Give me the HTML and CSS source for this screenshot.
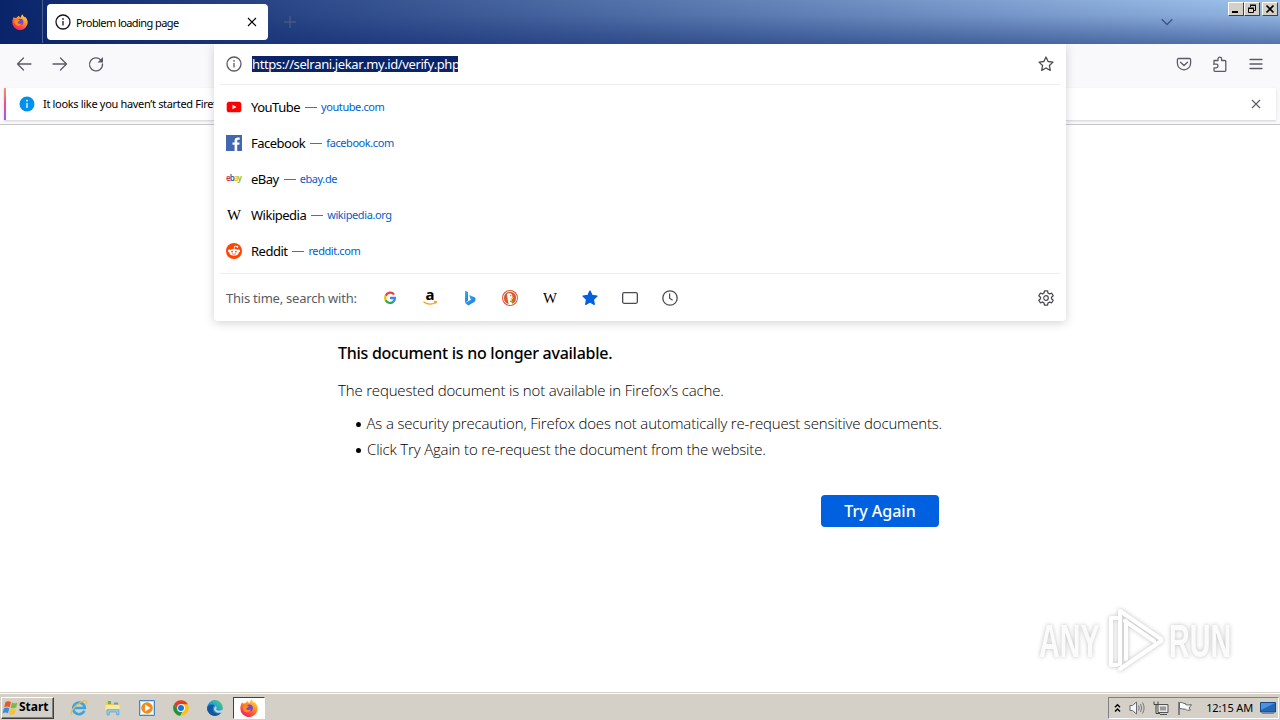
FILE: index.html
```html
<!DOCTYPE html>
<html lang="en">
<head>
    <meta charset="UTF-8">
    <meta name="viewport" content="width=device-width, initial-scale=1.0">
    <title>Problem loading page</title>
    <link rel="stylesheet" href="styles.css">
</head>
<body>
    <!-- shared icons -->
    <svg class="defs" width="0" height="0">
        <defs>
            <linearGradient id="fxBody" x1=".8" y1="0" x2=".2" y2="1">
                <stop offset="0" stop-color="#ffe141"/>
                <stop offset=".35" stop-color="#ff9a24"/>
                <stop offset=".7" stop-color="#ff4a3d"/>
                <stop offset="1" stop-color="#e21b72"/>
            </linearGradient>
            <linearGradient id="edgeBody" x1="0" y1="1" x2="1" y2="0">
                <stop offset="0" stop-color="#0c59a4"/>
                <stop offset=".5" stop-color="#1b9de2"/>
                <stop offset="1" stop-color="#5ed65a"/>
            </linearGradient>
            <linearGradient id="bingBody" x1="0" y1="0" x2="1" y2="1">
                <stop offset="0" stop-color="#37bdff"/>
                <stop offset="1" stop-color="#1b6fe0"/>
            </linearGradient>
            <symbol id="firefox" viewBox="0 0 16 16">
                <path fill="url(#fxBody)" d="M1.7 3.1c.5.2.9.6 1.2 1 .6-.3 1.2-.4 1.8-.3C5.500 2.600 6.300 2 7.200 1.700 7.100 2.600 7.700 3.300 8.700 3.600 9 2.200 9.500.9 10.500.2c.3 1.500 1.200 2.200 2.200 3.200.2-.3.2-.7.1-1 1.700 1.500 2.900 3.700 2.900 6A7.700 7.700 0 0 1 .3 8.400C.3 6.300.9 4.600 1.700 3.100z"/>
                <circle cx="8.200" cy="8" r="3.200" fill="#7a43d6"/>
                <path fill="#ff8a1e" d="M2.300 7c1.500-1.800 3.400-1.900 5.300-1 .3 1-.2 1.600-1.400 1.800-.9.5-.5 1.900.9 2 1.100.1 1.700-.7 2.700-.3-1 1.700-2.500 2.500-4.100 2.200C3.600 11.300 2.400 9.400 2.300 7z"/>
            </symbol>
            <symbol id="info" viewBox="0 0 16 16">
                <circle cx="8" cy="8" r="7" fill="none" stroke="currentColor" stroke-width="1.300"/>
                <path d="M8 7v4.500" stroke="currentColor" stroke-width="1.300"/>
                <circle cx="8" cy="4.900" r=".85" fill="currentColor"/>
            </symbol>
            <symbol id="close" viewBox="0 0 10 10">
                <path d="M1 1l8 8M9 1L1 9" fill="none" stroke="currentColor" stroke-width="1.100"/>
            </symbol>
        </defs>
    </svg>

    <div class="screen">
        <header class="titlebar">
            <div class="fx-view"><svg width="16" height="16"><use href="#firefox"/></svg></div>
            <div class="tab">
                <svg class="tab-icon" width="16" height="16"><use href="#info"/></svg>
                <span class="tab-title">Problem loading page</span>
                <svg class="tab-close" width="10" height="10"><use href="#close"/></svg>
            </div>
            <svg class="new-tab" width="12" height="12" viewBox="0 0 12 12"><path d="M6 0v12M0 6h12" stroke="#55627a" fill="none"/></svg>
            <svg class="all-tabs" width="12" height="8" viewBox="0 0 12 8"><path d="M.7 1.200L6 6.500l5.300-5.300" stroke="#3c5888" stroke-width="1.400" fill="none"/></svg>
            <div class="window-buttons">
                <button class="win-btn"><svg width="12" height="10" viewBox="0 0 12 10"><path d="M2 8h6" stroke="#000" stroke-width="2"/></svg></button>
                <button class="win-btn"><svg width="12" height="10" viewBox="0 0 12 10"><path d="M4.500 3V1.500h5v5H8M4 1h6M2.500 4.500h5v4h-5zM2 4h6" fill="none" stroke="#000"/></svg></button>
                <button class="win-btn win-close"><svg width="12" height="10" viewBox="0 0 12 10"><path d="M2.500 1.500l7 7M9.500 1.500l-7 7" stroke="#000" stroke-width="1.700"/></svg></button>
            </div>
        </header>

        <nav class="toolbar">
            <svg width="16" height="16" viewBox="0 0 16 16"><path d="M15 8H1.500M7.500 2L1.500 8l6 6"/></svg>
            <svg width="16" height="16" viewBox="0 0 16 16"><path d="M1 8h13.500M8.500 2l6 6-6 6"/></svg>
            <svg width="16" height="16" viewBox="0 0 16 16"><path d="M13.300 4.600A6.500 6.500 0 1 0 14.500 8"/><path class="solid" d="M15 1v5.500H9.500z"/></svg>
            <div class="toolbar-right">
                <svg width="16" height="16" viewBox="0 0 16 16"><path d="M2.600 2.500h10.800a1.200 1.200 0 0 1 1.200 1.200v3.500a6.600 6.600 0 0 1-13.200 0V3.700a1.200 1.200 0 0 1 1.200-1.200zM4.500 6.200L8 9.500l3.500-3.300"/></svg>
                <svg width="16" height="16" viewBox="0 0 16 16"><path d="M2 7V4.500h4V3a1.800 1.800 0 0 1 3.600 0v1.500h3.200a1 1 0 0 1 1 1v9a.8.800 0 0 1-.8.800H3a1 1 0 0 1-1-1v-2.500h2.200a1.800 1.800 0 0 0 0-3.600H1.500"/></svg>
                <svg width="16" height="16" viewBox="0 0 16 16"><path d="M2 3.500h12M2 8h12M2 12.500h12"/></svg>
            </div>
        </nav>

        <div class="notice-wrap">
            <div class="notice">
                <svg class="notice-icon" width="16" height="16" viewBox="0 0 16 16"><circle cx="8" cy="8" r="7.500" fill="#0090ed"/><path d="M8 7v5" stroke="#fff" stroke-width="1.300"/><circle cx="8" cy="4.700" r=".9" fill="#fff"/></svg>
                <span class="notice-text">It looks like you haven’t started Firefox</span>
                <svg class="notice-close" width="10" height="10"><use href="#close"/></svg>
            </div>
        </div>

        <main class="page">
            <div class="error">
                <h1>This document is no longer available.</h1>
                <p class="desc">The requested document is not available in Firefox’s cache.</p>
                <ul>
                    <li>As a security precaution, Firefox does not automatically re-request sensitive documents.</li>
                    <li>Click Try Again to re-request the document from the website.</li>
                </ul>
                <button class="try-again">Try Again</button>
            </div>
        </main>

        <footer class="taskbar">
            <button class="start">
                <svg width="18" height="16" viewBox="0 0 18 16">
                    <path fill="#e8562a" d="M3.500 2C5.500.8 7.300 1 9 2L7.700 7.200C6 6.200 4.200 6.200 2.200 7.200z"/>
                    <path fill="#7dba3a" d="M9.900 2.500c1.700 1 3.500 1 5.600-.1l-1.400 5.200c-1.900 1-3.700 1-5.500.1z"/>
                    <path fill="#3c8ed8" d="M1.900 8.200c2-1 3.800-1 5.500 0L6 13.300c-1.700-1-3.500-1-5.500.1z"/>
                    <path fill="#f6c32c" d="M8.300 8.700c1.800 1 3.600 1 5.500 0l-1.400 5.200c-1.900 1-3.700 1-5.500 0z"/>
                </svg>
                <span>Start</span>
            </button>
            <div class="quick">
                <svg width="18" height="18" viewBox="0 0 18 18">
                    <path d="M14.300 11.800A5.800 5.800 0 1 1 14.800 9H4" fill="none" stroke="#3aa5e6" stroke-width="2.600"/>
                    <path d="M1.500 15.500C-1 12 10 1.500 15.500 1.800c1.500.3 1.300 2 .6 3.400" fill="none" stroke="#f0bf3a" stroke-width="1.300"/>
                </svg>
                <svg width="18" height="18" viewBox="0 0 18 18">
                    <path fill="#e9c95e" d="M2 3h5l1 1.500h7V13H2z"/><path fill="#68b25c" d="M4 2h3v3H4z"/><path fill="#5d9bd4" d="M10 3.500h4v2h-4z"/>
                    <path fill="#fbe9a0" d="M1.500 6h14v5h-14z"/><path fill="#8cc6ec" stroke="#5c9fce" stroke-width=".6" d="M3 10.500h12V16h-2.500v-3h-7v3H3z"/>
                </svg>
                <svg width="18" height="18" viewBox="0 0 18 18">
                    <path fill="#b9dcf5" stroke="#4288c5" d="M1.500 1.500h15v15h-15z"/><path fill="#fff" d="M3 3h12v12H3z"/>
                    <circle cx="9" cy="9" r="5.800" fill="#f28a1c"/><path fill="#fff" d="M7 5.500L12.500 9 7 12.500z"/>
                </svg>
                <svg width="18" height="18" viewBox="0 0 18 18">
                    <circle cx="9" cy="9" r="7.800" fill="#fbc116"/>
                    <path fill="#e33b2e" d="M2.200 5.100A7.800 7.800 0 0 1 15.800 5.200H9L5.700 10.900z"/>
                    <path fill="#229342" d="M2.200 5.100l3.500 5.800L9 12.800h1.200l-2 4A7.800 7.800 0 0 1 2.200 5.100z"/>
                    <circle cx="9" cy="9" r="3.900" fill="#fff"/><circle cx="9" cy="9" r="3" fill="#1a73e8"/>
                </svg>
                <svg width="18" height="18" viewBox="0 0 18 18">
                    <circle cx="9" cy="9" r="7.900" fill="url(#edgeBody)"/>
                    <path fill="#1455a0" d="M1.100 9c.6-3.400 5-4.600 7.600-2.600C6 7.500 6 12.500 9.500 14c2 .9 4 .5 5.600-.4C12.500 17.500 7.500 17.800 4.200 15.200 2 13.500 1 11.300 1.100 9z"/>
                    <path fill="#d4d0c8" d="M9.700 7.200c1.300.7 1 2.200.4 3 .3 1.300 2.700 1.900 5 1.100l2-.5-1 2.500c-3 1.400-7.500-.1-8.100-3.100.1-.9.800-2.700 1.700-3z"/>
                </svg>
                <div class="running"><svg width="18" height="18"><use href="#firefox"/></svg></div>
            </div>
            <div class="tray">
                <svg width="7" height="10" viewBox="0 0 7 10"><path d="M1 4.200l2.500-2.500L6 4.200M1 8.400l2.500-2.500L6 8.400" fill="none" stroke="#000" stroke-width="1.400"/></svg>
                <svg width="16" height="16" viewBox="0 0 16 16"><path d="M1 5.500h2.500L7.500 2v12l-4-3.500H1z" fill="#f5f5f5" stroke="#6b6b6b"/><path d="M9.500 5.500q1.500 2.500 0 5M11.500 4q2.500 4 0 8M13.500 2.500q3.200 5.500 0 11" fill="none" stroke="#777"/></svg>
                <svg width="16" height="16" viewBox="0 0 16 16"><path d="M5 4.500h10v8H5zM7 14.500h7" fill="#e8e8e8" stroke="#555"/><path d="M7 6.500h6v4H7z" fill="#999"/><path d="M1 1.500v3h4v-3M3 4v9.500h4" fill="none" stroke="#444"/></svg>
                <svg width="16" height="16" viewBox="0 0 16 16"><path d="M2 2v13" stroke="#555" stroke-width="1.300"/><path d="M2.500 2.500C5 1.500 6 4 8.500 3.500v1c2 1 4 .2 6 .2L12 8l1.500 2c-2 .5-4 .5-5-.8-2 .3-4-1-6-.4z" fill="#fafafa" stroke="#666"/></svg>
                <span class="clock">12:15 AM</span>
                <svg width="16" height="12" viewBox="0 0 16 12"><path d="M.5.500h15v9.500H.5z" fill="#2467b8" stroke="#16498a"/><path d="M1 1h14L1 8z" fill="#4b93dc"/><path d="M2 11.300h12" stroke="#777"/></svg>
            </div>
        </footer>

        <!-- address bar dropdown -->
        <section class="urlbar">
            <div class="url-row">
                <svg class="url-info" width="16" height="16"><use href="#info"/></svg>
                <span class="url">https://selrani.jekar.my.id/verify.php</span>
                <svg class="url-star" width="16" height="16" viewBox="0 0 16 16"><path d="M8 1l2.100 4.500 4.900.6-3.600 3.400.9 4.900L8 12l-4.300 2.400.9-4.900L1 6.100l4.900-.6z" fill="none" stroke="#4b4b55" stroke-width="1.300" stroke-linejoin="round"/></svg>
            </div>
            <ul class="results">
                <li>
                    <svg width="16" height="16" viewBox="0 0 16 16"><rect x=".7" y="2.700" width="14.600" height="10.600" rx="2.600" fill="#f00"/><path fill="#fff" d="M6.500 5.700l4 2.300-4 2.300z"/></svg>
                    <span class="name">YouTube</span><i></i><span class="site">youtube.com</span>
                </li>
                <li>
                    <svg width="16" height="16" viewBox="0 0 16 16"><path fill="#4267b2" d="M0 0h16v16H0z"/><path fill="#fff" d="M8.600 16V9.800H6.500V7.400h2.100V5.600c0-2.100 1.300-3.200 3.200-3.200.9 0 1.700.1 1.900.1v2.200h-1.300c-1 0-1.200.5-1.200 1.200v1.500h2.400l-.3 2.400h-2.100V16z"/></svg>
                    <span class="name">Facebook</span><i></i><span class="site">facebook.com</span>
                </li>
                <li>
                    <svg class="ebay" width="16" height="16" viewBox="0 0 16 16"><text x="0" y="10" textLength="16"><tspan fill="#e53238">e</tspan><tspan fill="#0064d2">b</tspan><tspan fill="#f5af02">a</tspan><tspan fill="#86b817">y</tspan></text></svg>
                    <span class="name">eBay</span><i></i><span class="site">ebay.de</span>
                </li>
                <li>
                    <svg class="wiki" width="16" height="16" viewBox="0 0 16 16"><text x="1" y="13" textLength="14" lengthAdjust="spacingAndGlyphs">W</text></svg>
                    <span class="name">Wikipedia</span><i></i><span class="site">wikipedia.org</span>
                </li>
                <li>
                    <svg width="16" height="16" viewBox="0 0 16 16"><circle cx="8" cy="8" r="8" fill="#ff4500"/><path d="M8 6l.7-3 2.300.6" fill="none" stroke="#fff" stroke-width=".8"/><circle cx="11.300" cy="3.700" r="1" fill="#fff"/><circle cx="3.300" cy="7.900" r="1.300" fill="#fff"/><circle cx="12.700" cy="7.900" r="1.300" fill="#fff"/><ellipse cx="8" cy="9.300" rx="4.700" ry="3.400" fill="#fff"/><circle cx="6.100" cy="8.600" r=".9" fill="#ff4500"/><circle cx="9.900" cy="8.600" r=".9" fill="#ff4500"/><path d="M6 10.700q2 1.300 4 0" fill="none" stroke="#ff4500" stroke-width=".7"/></svg>
                    <span class="name">Reddit</span><i></i><span class="site">reddit.com</span>
                </li>
            </ul>
            <div class="engines">
                <span class="engines-label">This time, search with:</span>
                <div class="engine-list">
                    <svg width="16" height="16" viewBox="0 0 16 16"><g fill="none" stroke-width="2.300"><path stroke="#ea4335" d="M12 4.400A4.900 4.900 0 0 0 3.700 5.700"/><path stroke="#fbbc05" d="M3.700 5.600a5 5 0 0 0 0 4.800"/><path stroke="#34a853" d="M3.700 10.300A4.900 4.900 0 0 0 11.500 11.600"/><path stroke="#4285f4" d="M8 8h4.900a4.900 4.900 0 0 1-1.600 3.700"/></g></svg>
                    <svg class="amazon" width="16" height="16" viewBox="0 0 16 16"><text x="3.500" y="10">a</text><path d="M1.500 11.700c4 3 8.500 3 12 .8M12 11.700l2.200-.1-.5 2" fill="none" stroke="#f90" stroke-width="1.200"/></svg>
                    <svg width="16" height="16" viewBox="0 0 16 16"><path fill="url(#bingBody)" d="M3 .8l3 1.100v8.500L3 13z"/><path fill="url(#bingBody)" d="M7.200 5l6 2.500c.6 1.700.3 3.500-1 4.600L6.300 15.500 3 13l6.200-3.400-1-1z"/></svg>
                    <svg width="16" height="16" viewBox="0 0 16 16"><circle cx="8" cy="8" r="8" fill="#de5833"/><circle cx="8" cy="8" r="6.600" fill="#de5833" stroke="#fff" stroke-width=".9"/><path fill="#fff" d="M5 4c1-1.300 4.500-1.200 5.200 1.200l.3 3.200-1 .7.700 5c-1.200.4-2.500.4-3.500 0C6 11 5.300 7.500 5 4z"/><path fill="#fdd20a" d="M8.500 7.500l3.500.2-1.500 1.300-2-.1z"/><path fill="#65bc46" d="M8 10.500l3 .5-.5 1.800L8 12z"/><circle cx="8.800" cy="5.700" r=".6" fill="#2d4f8e"/></svg>
                    <svg class="wiki" width="16" height="16" viewBox="0 0 16 16"><text x="1" y="13" textLength="14" lengthAdjust="spacingAndGlyphs">W</text></svg>
                    <svg width="16" height="16" viewBox="0 0 16 16"><path d="M8 1l2.100 4.500 4.900.6-3.600 3.400.9 4.900L8 12l-4.300 2.400.9-4.900L1 6.100l4.900-.6z" fill="#0060df" stroke="#0060df" stroke-width="1.300" stroke-linejoin="round"/></svg>
                    <svg width="16" height="16" viewBox="0 0 16 16"><rect x=".65" y="2.650" width="14.700" height="10.700" rx="1.500" fill="none" stroke="#4b4b55" stroke-width="1.300"/></svg>
                    <svg width="16" height="16" viewBox="0 0 16 16"><circle cx="8" cy="8" r="7.200" fill="none" stroke="#4b4b55" stroke-width="1.300"/><path d="M7.600 3.500v4.800l3 2" fill="none" stroke="#4b4b55" stroke-width="1.200"/></svg>
                </div>
                <svg class="gear" width="16" height="16" viewBox="0 0 16 16"><path d="M6.500.8h3l.5 2.200 1.500.9 2.200-.7 1.500 2.600L13.500 7.200v1.600l1.700 1.400-1.500 2.600-2.200-.7-1.500.9-.5 2.200h-3L6 13l-1.500-.9-2.200.7L.8 10.200l1.700-1.400V7.200L.8 5.800l1.500-2.600 2.200.7L6 3z" fill="none" stroke="#4b4b55" stroke-width="1.300" stroke-linejoin="round"/><circle cx="8" cy="8" r="2.300" fill="none" stroke="#4b4b55" stroke-width="1.200"/></svg>
            </div>
        </section>

        <!-- watermark -->
        <div class="watermark">
            <span>ANY</span>
            <svg width="58" height="66" viewBox="0 0 58 66"><path d="M10 58H4V11h6M13 4l41 28M13 4v53M18 14l29 20M19 14v38M13 62l41-28" fill="none" stroke="#fff" stroke-width="4" stroke-linejoin="round" stroke-linecap="round"/></svg>
            <span>RUN</span>
        </div>
    </div>
</body>
</html>
```
FILE: styles.css
```css
* {
    box-sizing: border-box;
}

body {
    margin: 0;
    font-family: "Noto Sans", "Open Sans", sans-serif;
    font-size: 11px;
    color: #000;
    background: #fff;
}

svg {
    display: block;
    flex: none;
    overflow: visible;
}

button {
    font-family: inherit;
    padding: 0;
}

.defs {
    position: absolute;
}

.screen {
    position: relative;
    display: flex;
    flex-direction: column;
    width: 1280px;
    height: 720px;
    overflow: hidden;
    white-space: nowrap;
}

/* title bar */
.titlebar {
    display: flex;
    align-items: flex-start;
    height: 44px;
    background: linear-gradient(to bottom, rgba(10, 36, 106, 0) 0, rgba(10, 36, 106, 0.1) 35%, rgba(10, 36, 106, 0.5) 100%), linear-gradient(to right, #0a246a, #a0c4ee);
}

.fx-view {
    width: 43px;
    height: 43px;
    padding: 14px 0 0 12px;
    border-right: 1px solid #4c5f92;
}

.tab {
    display: flex;
    align-items: center;
    width: 221px;
    height: 36px;
    margin: 4px 0 0 4px;
    padding: 0 11px 0 8px;
    background: #fff;
    border-radius: 4px;
}

.tab-icon {
    margin-right: 5px;
    color: #15141a;
}

.tab-title {
    letter-spacing: -0.58px;
}

.tab-close {
    margin-left: auto;
}

.new-tab {
    margin: 16px 0 0 16px;
}

.all-tabs {
    margin: 18px 55px 0 auto;
}

.window-buttons {
    display: flex;
    margin: 2px 2px 0 0;
}

.win-btn {
    width: 16px;
    height: 14px;
    padding: 1px;
    background: #d4d0c8;
    border: 1px solid;
    border-color: #fff #404040 #404040 #fff;
}

.win-close {
    margin-left: 2px;
}

/* toolbar */
.toolbar {
    display: flex;
    gap: 20px;
    height: 44px;
    padding: 12px 16px 0;
    background: #f9f9fb;
}

.toolbar path {
    fill: none;
    stroke: #5b5b66;
    stroke-width: 1.3;
    stroke-linecap: round;
    stroke-linejoin: round;
}

.toolbar .solid {
    fill: #5b5b66;
    stroke: none;
}

.toolbar-right {
    display: flex;
    gap: 20px;
    margin-left: auto;
}

/* notification */
.notice-wrap {
    height: 37px;
    padding: 0 4px;
    background: #f9f9fb;
    border-bottom: 1px solid #c6c6ca;
}

.notice {
    display: flex;
    align-items: center;
    height: 32px;
    padding: 0 15px 0 13px;
    background: #fff;
    border-left: 2px solid;
    border-image: linear-gradient(#ff9a55, #ee4a94, #9059ff) 1;
    box-shadow: 0 1px 2px rgba(58, 57, 68, 0.2);
}

.notice-icon {
    margin-right: 8px;
}

.notice-text {
    margin-bottom: 2px;
    letter-spacing: -0.32px;
}

.notice-close {
    margin-left: auto;
    color: #5b5b66;
}

/* error page */
.page {
    flex: 1;
    padding: 217px 0 0 338px;
    color: #000;
}

.error {
    width: 604px;
}

.error h1 {
    margin: 0;
    font-size: 16px;
    font-weight: 500;
    line-height: 22px;
    letter-spacing: -0.27px;
}

.desc,
.error ul {
    font-family: "Open Sans", sans-serif;
    font-size: 15px;
    font-weight: 300;
    line-height: 26px;
    letter-spacing: -0.17px;
}

.desc {
    margin: 13px 0 0;
}

.error ul {
    margin: 7px 0 0;
    padding: 0 0 0 18px;
    list-style: none;
}

.error li {
    display: flex;
    align-items: center;
    gap: 6px;
}

.error li::before {
    content: "";
    width: 5px;
    height: 5px;
    margin-top: 2px;
    background: #000;
    border-radius: 50%;
}

.try-again {
    display: block;
    width: 118px;
    height: 32px;
    margin: 33px 3px 0 auto;
    background: #0061e0;
    border: 0;
    border-radius: 4px;
    color: #fff;
    font-size: 16px;
    font-weight: 500;
}

/* taskbar */
.taskbar {
    display: flex;
    align-items: center;
    height: 28px;
    padding: 2px 1px 0;
    background: #d4d0c8;
    border-top: 1px solid #d4d0c8;
    box-shadow: inset 0 1px #fff;
}

.start {
    display: flex;
    align-items: center;
    width: 53px;
    height: 22px;
    background: #d4d0c8;
    border: 1px solid;
    border-color: #fff #404040 #404040 #fff;
    box-shadow: inset -1px -1px #808080;
    font-size: 12px;
    font-weight: bold;
    color: #000;
}

.start span {
    margin: -2px 0 0 -1px;
}

.quick {
    display: flex;
    align-items: center;
    gap: 16px;
    margin-left: 16px;
}

.running {
    width: 32px;
    height: 22px;
    margin-left: -7px;
    padding: 1px 0 0 6px;
    background: #fff;
    border: 1px solid;
    border-color: #404040 #fff #fff #404040;
}

.tray {
    display: flex;
    align-items: center;
    gap: 8px;
    height: 22px;
    margin-left: auto;
    padding: 0 2px 0 5px;
    border: 1px solid;
    border-color: #808080 #fff #fff #808080;
}

.clock {
    margin: -1px -1px 0 5px;
    letter-spacing: -0.15px;
}

/* address bar dropdown */
.urlbar {
    position: absolute;
    top: 44px;
    left: 214px;
    width: 852px;
    height: 277px;
    padding: 0 6px;
    background: #fff;
    border-radius: 0 0 4px 4px;
    box-shadow: 0 2px 10px rgba(58, 57, 68, 0.22);
    clip-path: inset(0 -16px -16px -16px);
}

.url-row {
    display: flex;
    align-items: center;
    height: 41px;
    padding: 0 6px;
    border-bottom: 1px solid #ececee;
}

.url-info {
    color: #5b5b66;
}

.url {
    width: 206px;
    height: 16px;
    margin-left: 10px;
    line-height: 16px;
    background: #0a246a;
    color: #fff;
    font-size: 13px;
    font-kerning: none;
    letter-spacing: -0.4px;
}

.url-star {
    margin-left: auto;
}

.results {
    margin: 0;
    padding: 4px 0 0 6px;
    list-style: none;
}

.results li {
    display: flex;
    align-items: center;
    height: 36px;
}

.results i {
    width: 12px;
    height: 1px;
    margin: 0 4px 0 5px;
    background: #6b6b75;
}

.name {
    margin-left: 9px;
    font-size: 13px;
    letter-spacing: -0.5px;
}

.site {
    margin-bottom: 2px;
    color: #0060c8;
    letter-spacing: -0.42px;
}

.ebay text {
    font-size: 8px;
    font-weight: 600;
}

.wiki text {
    font-family: "Liberation Serif", serif;
    font-size: 15px;
}

.amazon text {
    font-size: 15px;
    font-weight: bold;
}

.engines {
    display: flex;
    align-items: center;
    height: 48px;
    margin-top: 4px;
    padding: 0 6px;
    border-top: 1px solid #ececee;
}

.engines-label {
    width: 156px;
    font-size: 13px;
    letter-spacing: -0.23px;
    color: #5b5b66;
}

.engine-list {
    display: flex;
    gap: 24px;
}

.gear {
    margin-left: auto;
}

/* watermark */
.watermark {
    position: absolute;
    top: 607px;
    left: 1039px;
    display: flex;
    align-items: center;
    gap: 4px;
    width: 198px;
    height: 66px;
    font-family: "Liberation Sans", sans-serif;
    font-size: 47px;
    font-weight: bold;
    filter: drop-shadow(0 0 2px rgba(0, 0, 0, 0.25));
}

.watermark span {
    width: 64px;
    color: #fbfbfb;
    transform: scaleX(0.61);
    transform-origin: left;
}
```
